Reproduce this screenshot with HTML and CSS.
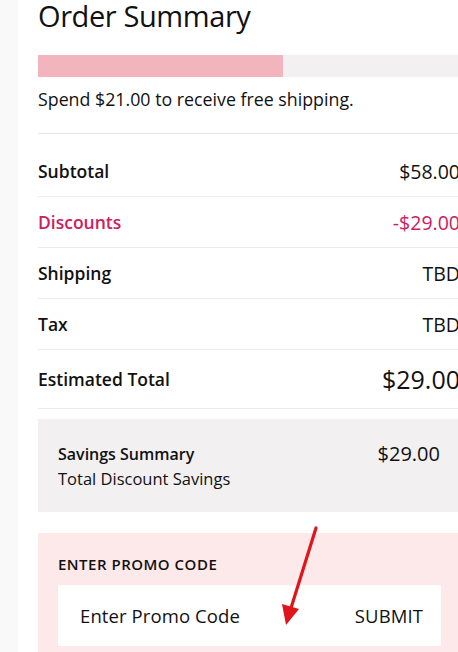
FILE: index.html
```html
<!DOCTYPE html>
<html>
<head>
<meta charset="utf-8">
<link rel="stylesheet" href="styles.css">
</head>
<body>
<div class="page">
  <div class="rail"></div>
  <main class="summary">
    <h1 class="title">Order Summary</h1>
    <div class="progress"><div class="progress-fill" style="width:245px"></div></div>
    <p class="ship-note">Spend $21.00 to receive free shipping.</p>
    <div class="rows">
      <div class="row"><span class="label">Subtotal</span><span class="value">$58.00</span></div>
      <div class="row discount"><span class="label">Discounts</span><span class="value">-$29.00</span></div>
      <div class="row"><span class="label">Shipping</span><span class="value">TBD</span></div>
      <div class="row"><span class="label">Tax</span><span class="value">TBD</span></div>
      <div class="row total"><span class="label">Estimated Total</span><span class="value">$29.00</span></div>
    </div>
    <section class="savings">
      <div class="savings-text">
        <div class="savings-title">Savings Summary</div>
        <div class="savings-sub">Total Discount Savings</div>
      </div>
      <div class="savings-amount">$29.00</div>
    </section>
    <section class="promo">
      <div class="promo-title">ENTER PROMO CODE</div>
      <div class="promo-field">
        <span class="promo-placeholder">Enter Promo Code</span>
        <span class="promo-submit">SUBMIT</span>
      </div>
    </section>
  </main>
  <svg class="arrow" width="60" height="110" viewBox="0 0 60 110">
    <line x1="46" y1="4" x2="21" y2="84" stroke="#e0151b" stroke-width="3.2" stroke-linecap="round"/>
    <polygon points="16,101 12,80 29,85" fill="#e0151b"/>
  </svg>
</div>
</body>
</html>
```
FILE: styles.css
```css
html, body {
  margin: 0;
  padding: 0;
  background: #ffffff;
  overflow: hidden;
}
body {
  width: 458px;
  height: 652px;
  font-family: "Open Sans", "Liberation Sans", sans-serif;
  color: #111111;
}
.page {
  position: relative;
  display: flex;
  width: 480px;
  height: 652px;
}
.rail {
  width: 18px;
  flex: none;
  background: #f9f9f9;
}
.summary {
  width: 422px;
  flex: none;
  padding-left: 20px;
}
.title {
  margin: 0;
  font-weight: 400;
  font-size: 29px;
  line-height: 32px;
  letter-spacing: -0.4px;
  color: #111;
}
.progress {
  margin-top: 23px;
  height: 22px;
  background: #f2f0f1;
}
.progress-fill {
  height: 100%;
  background: #f2b5be;
}
.ship-note {
  margin: 0;
  padding: 12px 0 24px;
  font-size: 17.8px;
  line-height: 20px;
  letter-spacing: 0;
  border-bottom: 1px solid #e6e6e6;
}
.rows {
  display: flex;
  flex-direction: column;
}
.row {
  display: flex;
  justify-content: space-between;
  align-items: center;
  height: 50px;
  border-bottom: 1px solid #ececec;
  font-size: 17.5px;
}
.rows .row:first-child {
  height: 63px;
  padding-top: 12px;
  box-sizing: border-box;
}
.label {
  font-weight: 600;
}
.value {
  font-weight: 400;
  font-size: 19.5px;
}
.discount {
  color: #cc2060;
}
.total {
  height: 58px;
}
.total .value {
  font-size: 25px;
}
.savings {
  margin-top: 10px;
  background: #f2f0f1;
  height: 93px;
  box-sizing: border-box;
  padding: 23px 20px 0 20px;
  display: flex;
  justify-content: space-between;
  align-items: flex-start;
}
.savings-title {
  font-weight: 600;
  font-size: 16px;
  line-height: 24px;
}
.savings-sub {
  font-size: 16.5px;
  line-height: 26px;
}
.savings-amount {
  font-size: 20px;
  line-height: 24px;
}
.promo {
  margin-top: 21px;
  background: #fde9e9;
  padding: 22px 19px 10px 20px;
  height: 130px;
  box-sizing: border-box;
}
.promo-title {
  font-weight: 600;
  font-size: 15px;
  line-height: 18px;
  letter-spacing: 0.5px;
}
.promo-field {
  margin-top: 12px;
  background: #ffffff;
  height: 61px;
  display: flex;
  justify-content: space-between;
  align-items: center;
  padding: 0 18px 0 22px;
  font-size: 18.5px;
  letter-spacing: 0.1px;
}
.arrow {
  position: absolute;
  left: 270px;
  top: 524px;
}
```
